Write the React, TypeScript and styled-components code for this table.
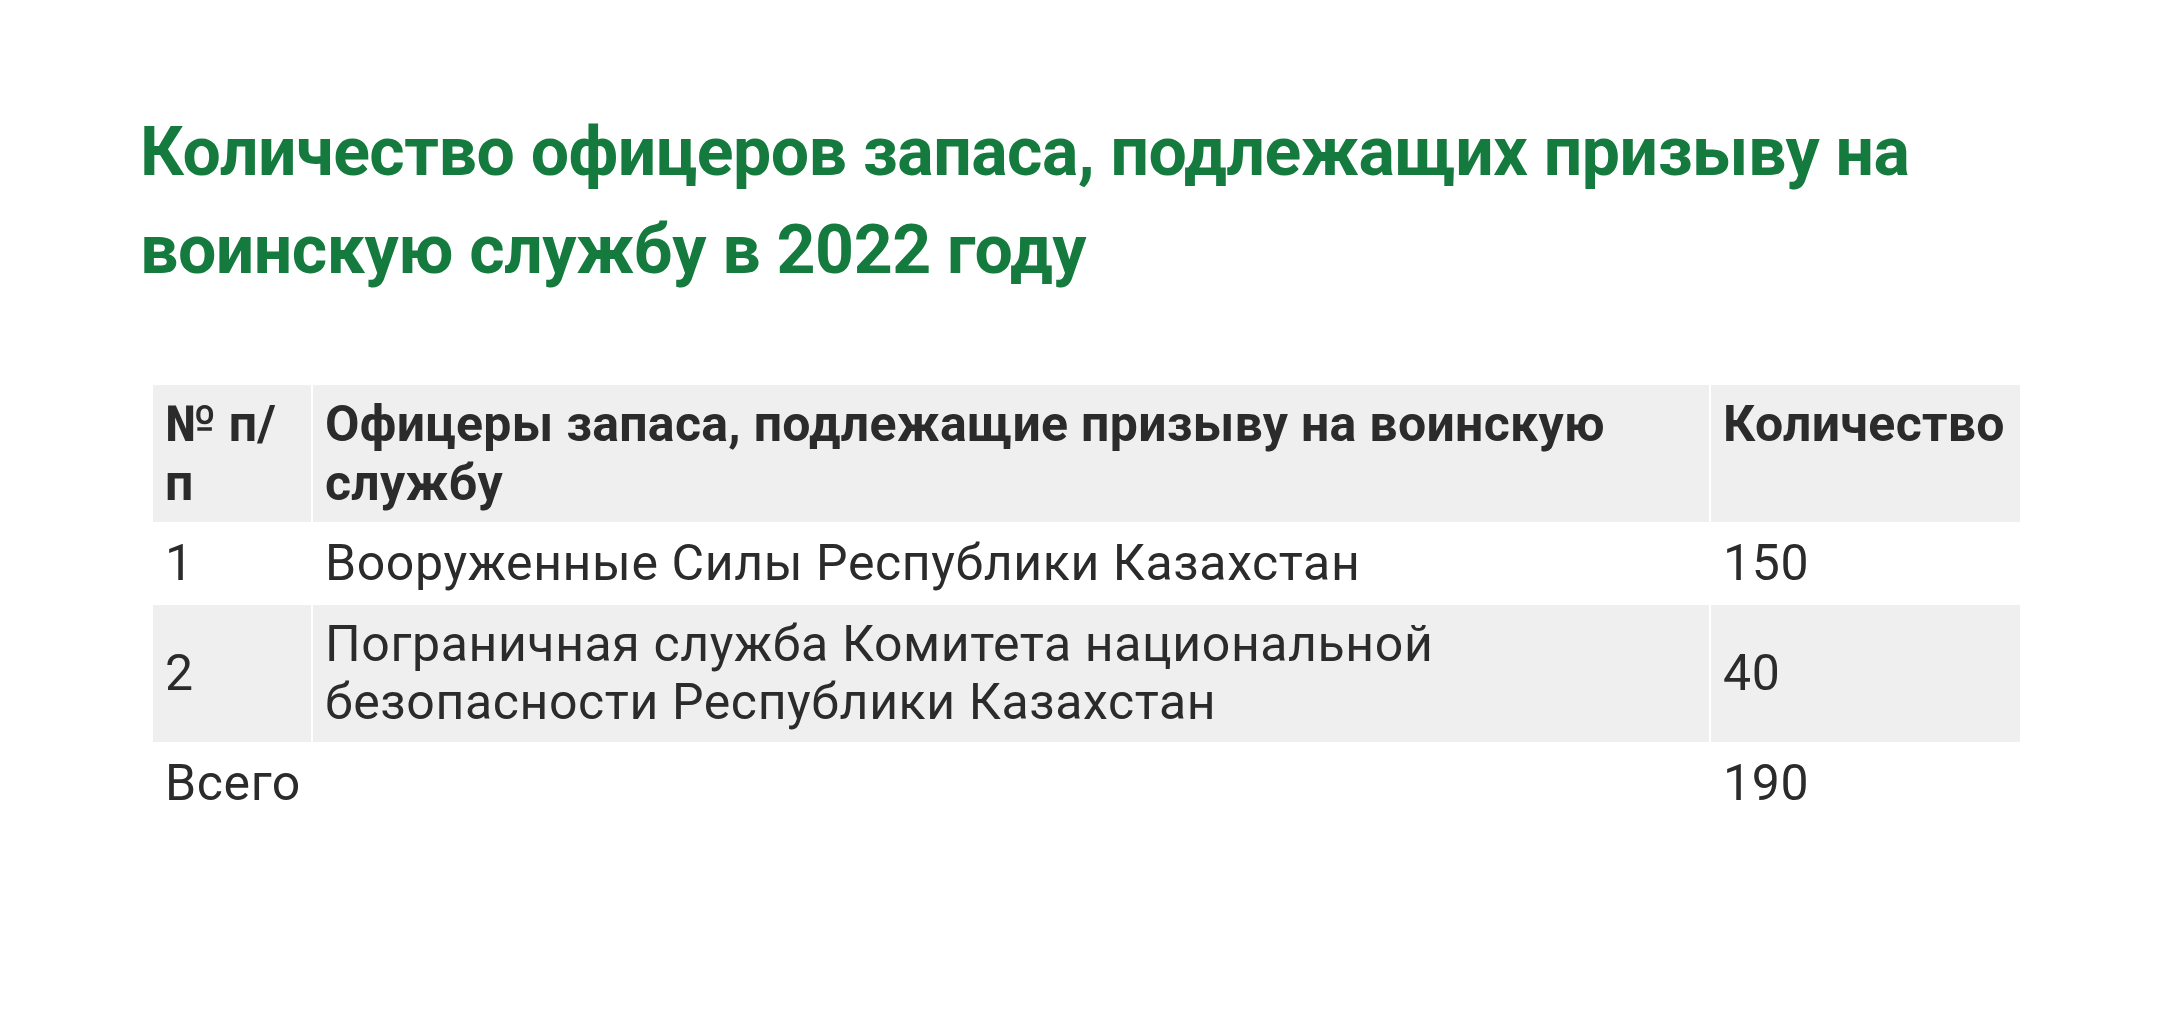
import React from "react";
import styled, { createGlobalStyle } from "styled-components";

const GlobalStyle = createGlobalStyle`
  html, body {
    margin: 0;
    padding: 0;
    background: #ffffff;
  }
  body {
    font-family: Roboto, "Liberation Sans", Arial, sans-serif;
  }
`;

const Page = styled.main`
  padding: 103px 0 0 140px;
  box-sizing: border-box;
  width: 2160px;
  min-height: 1022px;
`;

const Title = styled.h1`
  margin: 0;
  width: 1880px;
  font-family: Roboto, "Liberation Sans", Arial, sans-serif;
  font-weight: 700;
  font-size: 68px;
  line-height: 98px;
  letter-spacing: -0.5px;
  color: #147a3e;
`;

const Table = styled.table`
  margin: 84px 0 0 11px;
  width: 1871px;
  table-layout: fixed;
  border-collapse: separate;
  border-spacing: 2px;
  font-family: Roboto, "Liberation Sans", Arial, sans-serif;
  font-size: 50px;
  line-height: 58.6px;
  color: #2b2b2b;
`;

const Row = styled.tr<{ $shaded?: boolean }>`
  background: ${(p) => (p.$shaded ? "#efefef" : "transparent")};
`;

const HeadCell = styled.th`
  padding: 10px 12px;
  text-align: left;
  vertical-align: top;
  font-weight: 700;
  letter-spacing: 0.3px;
`;

const Cell = styled.td`
  padding: 10px 12px;
  text-align: left;
  vertical-align: middle;
  font-weight: 400;
  letter-spacing: 0.6px;
`;

const rows = [
  { n: "1", name: "Вооруженные Силы Республики Казахстан", qty: "150", shaded: false },
  {
    n: "2",
    name: "Пограничная служба Комитета национальной безопасности Республики Казахстан",
    qty: "40",
    shaded: true,
  },
  { n: "Всего", name: "", qty: "190", shaded: false },
];

export default function App() {
  return (
    <>
      <GlobalStyle />
      <Page>
        <Title>Количество офицеров запаса, подлежащих призыву на воинскую службу в 2022 году</Title>
        <Table>
          <colgroup>
            <col style={{ width: 158 }} />
            <col />
            <col style={{ width: 309 }} />
          </colgroup>
          <thead>
            <Row $shaded>
              <HeadCell>№ п/п</HeadCell>
              <HeadCell>Офицеры запаса, подлежащие призыву на воинскую службу</HeadCell>
              <HeadCell>Количество</HeadCell>
            </Row>
          </thead>
          <tbody>
            {rows.map((r) => (
              <Row key={r.n} $shaded={r.shaded}>
                <Cell>{r.n}</Cell>
                <Cell>{r.name}</Cell>
                <Cell>{r.qty}</Cell>
              </Row>
            ))}
          </tbody>
        </Table>
      </Page>
    </>
  );
}
